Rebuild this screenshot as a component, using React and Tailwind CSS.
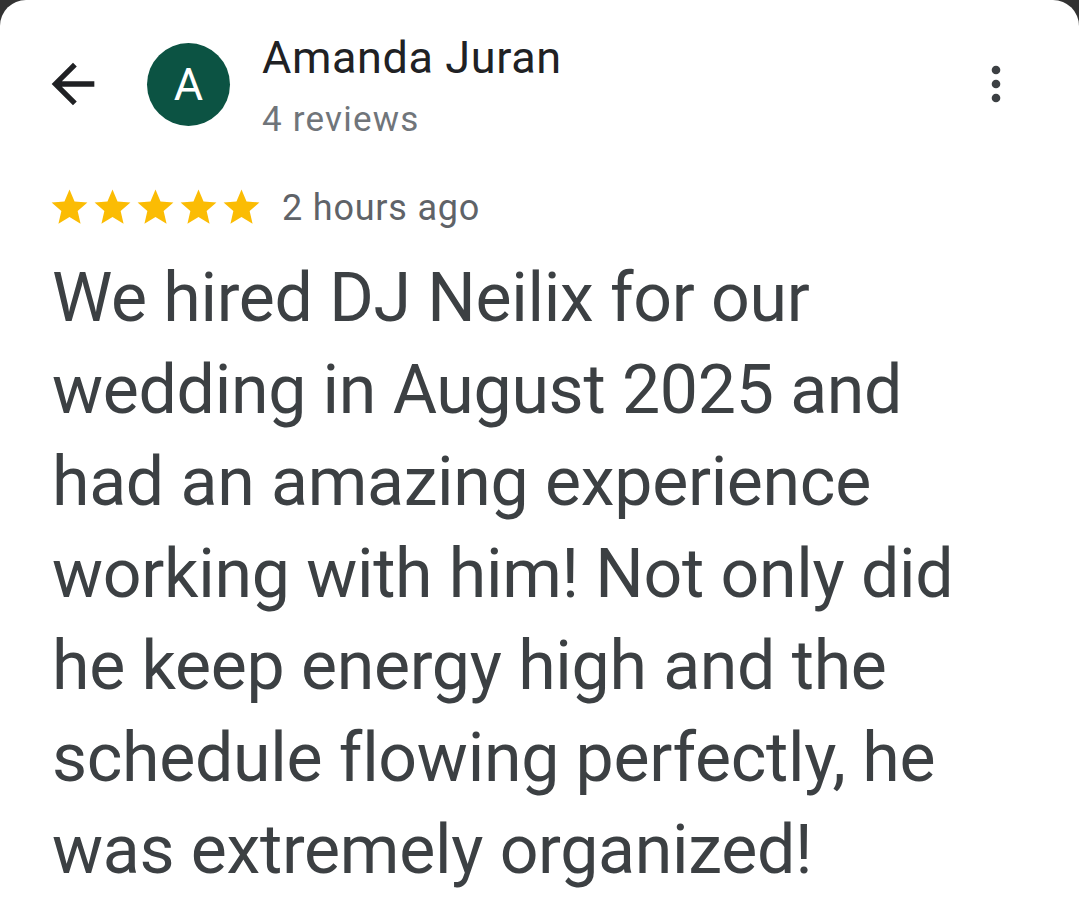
import React from 'react';

const font = { fontFamily: 'Roboto, "Noto Sans", Arial, sans-serif' };

function BackArrow() {
  return (
    <svg width="64" height="64" viewBox="0 0 24 24" fill="#202124">
      <path d="M20 11H7.83l5.59-5.59L12 4l-8 8 8 8 1.41-1.41L7.83 13H20v-2z" />
    </svg>
  );
}

function MoreVert() {
  return (
    <svg width="56" height="56" viewBox="0 0 24 24" fill="#3c4043">
      <circle cx="12" cy="6" r="1.85" />
      <circle cx="12" cy="12" r="1.85" />
      <circle cx="12" cy="18" r="1.85" />
    </svg>
  );
}

function Star() {
  return (
    <svg width="43" height="43" viewBox="0 0 24 24" fill="#fbbc04">
      <path d="M12 17.27L18.18 21l-1.64-7.03L22 9.24l-7.19-.61L12 2 9.19 8.63 2 9.24l5.46 4.73L5.82 21z" />
    </svg>
  );
}

const review =
  'We hired DJ Neilix for our wedding in August 2025 and had an amazing experience working with him! Not only did he keep energy high and the schedule flowing perfectly, he was extremely organized!';

export default function App() {
  return (
    <div className="min-h-screen bg-[#333333]" style={font}>
      <div className="min-h-[916px] rounded-t-[26px] bg-white">
        {/* reviewer header */}
        <div className="flex items-start pt-[32px]">
          <button className="ml-[41px] mt-[20px] shrink-0">
            <BackArrow />
          </button>
          <div className="ml-[42px] mt-[11px] flex h-[83px] w-[83px] shrink-0 items-center justify-center rounded-full bg-[#0c5343] text-[45px] leading-none text-white">
            A
          </div>
          <div className="ml-[32px]">
            <div className="text-[45px] leading-[52px] tracking-[0.6px] text-[#202124]">Amanda Juran</div>
            <div className="mt-[16px] text-[35px] leading-[40px] tracking-[1.2px] text-[#70757a]">4 reviews</div>
          </div>
          <button className="ml-auto mr-[55px] mt-[24px]">
            <MoreVert />
          </button>
        </div>

        {/* rating + time */}
        <div className="mt-[46px] flex items-start pl-[48px]">
          <div className="flex">
            {[0, 1, 2, 3, 4].map((i) => (
              <Star key={i} />
            ))}
          </div>
          <span className="ml-[19px] mt-[1px] text-[36px] leading-[43px] tracking-[0.8px] text-[#5f6368]">2 hours ago</span>
        </div>

        {/* review body */}
        <p className="mt-[22px] pl-[52px] pr-[100px] text-[68px] leading-[92px] tracking-[-0.3px] text-[#3c4043]">{review}</p>
      </div>
    </div>
  );
}
